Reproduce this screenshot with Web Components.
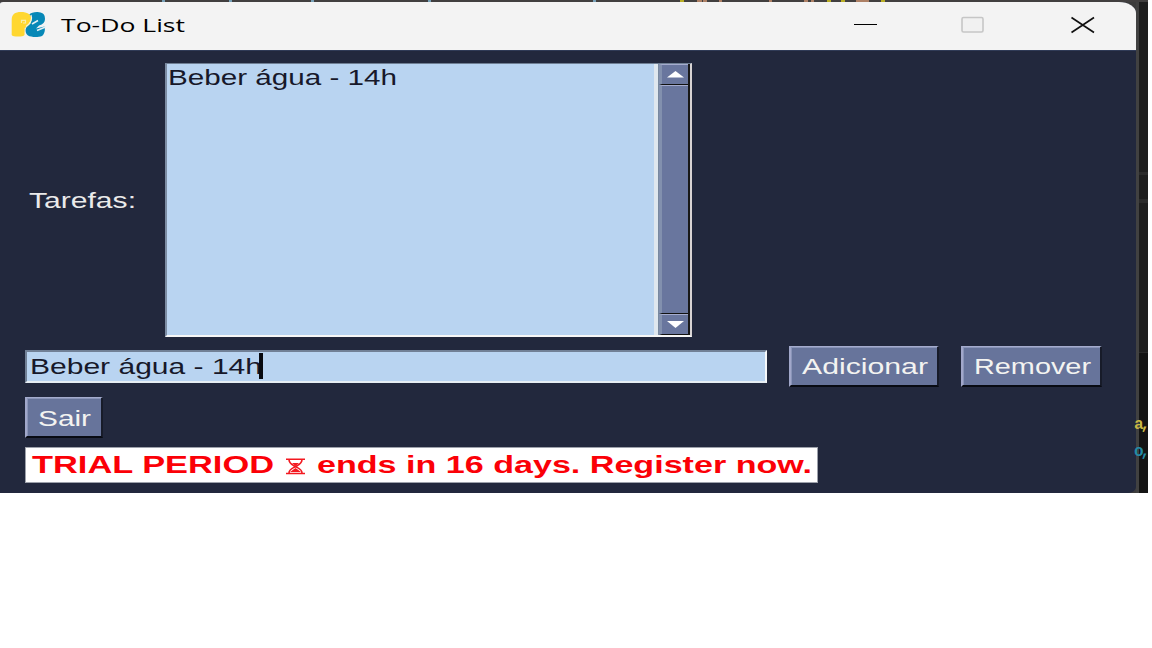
<!DOCTYPE html>
<html lang="pt"><head><meta charset="utf-8"><title>To-Do List</title>
<style>body{margin:0;background:#fff;overflow:hidden;font-family:"Liberation Sans",Arial,sans-serif}</style></head>
<body>
<todo-desktop></todo-desktop>
<script>
const define=(name,html,setup)=>customElements.define(name,class extends HTMLElement{
  connectedCallback(){
    if(this.shadowRoot)return;
    const t=document.createElement('template');t.innerHTML=html;
    this.attachShadow({mode:'open'}).append(t.content.cloneNode(true));
    if(setup)setup.call(this,this.shadowRoot);
  }
});

// One line of text, widened to a given advance length.
define('wide-text',`<style>:host{display:block;flex:none}svg{display:block;overflow:visible}</style>
<svg><text lengthAdjust="spacingAndGlyphs"></text></svg>`,function(root){
  const svg=root.querySelector('svg'),t=root.querySelector('text');
  const w=this.getAttribute('length'),s=+this.getAttribute('size');
  svg.setAttribute('width',w);svg.setAttribute('height',s);
  t.setAttribute('textLength',w);t.setAttribute('y',this.getAttribute('base')||s*.86);
  t.style.cssText='font-size:'+s+'px;fill:currentColor';
  t.textContent=this.textContent;
});

define('title-bar',`<style>
:host{display:flex;height:49px;box-sizing:border-box;background:#f3f3f3;border-bottom:1px solid #303b57;border-radius:3px 17px 0 0/2px 11px 0 0;color:#000;font-family:"Open Sans","Noto Sans",sans-serif;align-items:flex-start}
.logo{margin:9px 0 0 11px;flex:none}wide-text{margin:13px 0 0 15px}
.controls{display:flex;margin:13px 0 0 auto;padding-right:41px;gap:83px}
.controls svg:last-child{margin-left:3px}
</style>
<svg class="logo" width="35" height="27" viewBox="0 0 35 27">
<path fill="#0788b7" d="M18 4C20 1.500 24 .8 28 1.200C32.500 1.600 34 4 34 8C34 11 32 13.500 28 14.500L25 17.500L33.500 15.500C34.500 19 33.500 23 31 25C27 26.500 20 26.300 17 24.500C14 22 14 18 16 15.500L20 12Z"/>
<path fill="#ffd730" d="M.7 9C.7 3 4 .9 10 .9C16 .9 20.500 3 20.500 8C20.500 12 18 15 13.700 17L13.500 24C12.500 26 1.500 26 .7 24Z"/>
<path fill="none" stroke="#f3f3f3" stroke-width="1.200" d="M20 4C21.500 8 20 12 15 15.500"/>
<path fill="none" stroke="#f8edaa" stroke-width="1.200" d="M10.500 12V9.300H14.500V12H12"/>
<path fill="none" stroke="#e3f0f4" stroke-width="1.500" d="M21 13L27 9.500M26 19.500L34.500 16"/>
</svg>
<wide-text length="124" size="19" base="16.500">To-Do List</wide-text>
<div class="controls">
<svg width="24" height="20"><path d="M0 9.500H23" stroke="#000"/></svg>
<svg width="24" height="20"><rect x="1" y="2.500" width="21" height="14.500" rx="1.500" fill="#f1f1f1" stroke="#c6c6c6" stroke-width="1.600"/></svg>
<svg width="24" height="20"><path d="M.5 2.500L23 17.500M23 2.500L.5 17.500" fill="none" stroke="#111" stroke-width="1.700"/></svg>
</div>`);

define('push-button',`<style>
:host{display:flex;box-sizing:border-box;height:41px;background:#67749b;border:solid;border-width:1px 2px 2px 2px;border-color:#a5acce #171b29 #080b13 #a1a7ca;padding:10px 0 0 11px;color:#f3f3f1;box-shadow:inset 1px 1px #8994b8}
</style><slot></slot>`);

define('list-box',`<style>
:host{display:flex;box-sizing:border-box;width:527px;height:274px;background:#b9d4f1;border:solid;border-width:1px 2px 2px;border-color:#6f7f94 #d8d4d4 #f7f7f7 #7c8ca3}
.items{flex:1;padding:4px 0 0 1px;color:#17182a;border-right:4px solid #dfe7ef}
.bar{display:flex;flex-direction:column;width:32px;box-sizing:border-box;border-left:1px solid #7889a0;border-right:2px solid #181818;flex:none}
.arrow,.thumb{box-sizing:border-box;background:#69769e;border-left:3px solid #8290ae;border-top:1px solid #a5acce;border-bottom:1px solid #111}
.arrow{height:21px;display:flex;justify-content:center;align-items:center;flex:none}.thumb{flex:1}
</style>
<div class="items"><slot></slot></div>
<div class="bar"><div class="arrow"><svg width="17" height="7"><path fill="#fff" d="M0 6.500L8.500 0L17 6.500Z"/></svg></div><div class="thumb"></div><div class="arrow"><svg width="17" height="7"><path fill="#fff" d="M0 0H17L8.500 7Z"/></svg></div></div>`);

define('text-field',`<style>
:host{display:flex;box-sizing:border-box;width:742px;height:33px;background:#b9d4f1;color:#17182a;border:solid;border-width:2px 2px 2px;border-color:#718096 #f6f8fa #e6edf3 #718096;padding:2px 0 0 3px}
i{width:4px;height:26px;background:#080a10;margin:-1px 0 0 -3px}
</style><slot></slot><i></i>`);

define('trial-notice',`<style>
:host{display:flex;box-sizing:border-box;width:793px;height:36px;background:#fff;border:1px solid #9da1ab;padding:5px 0 0 6px;color:#fb0007;font-weight:bold}
svg{flex:none;margin:5px 12px 0 12px}
</style>
<wide-text length="242" size="24" base="20">TRIAL PERIOD</wide-text>
<svg width="19" height="17" viewBox="0 0 19 17" fill="none" stroke="#f31920" stroke-width="1.600"><path d="M0 1.200H19M0 15.500H19M3 1.500C3 6 7 7 9.500 8.500C12 10 16 11 16 15M16 1.500C16 6 12 7 9.500 8.500C7 10 3 11 3 15"/><path fill="#f31920" stroke="none" d="M6 5H13L9.500 8ZM4 14L9.500 10L15 14Z"/></svg>
<wide-text length="495" size="24" base="20">ends in 16 days. Register now.</wide-text>`);

// Sliver of the code editor that shows to the right of the window.
define('editor-edge',`<style>
:host{display:block;position:relative;width:12px;height:491px;flex:none;background:linear-gradient(90deg,#414141 3px,transparent 3px),linear-gradient(#1e1e1e 0 170px,#2b2b2b 170px 173px,#1e1e1e 173px 197px,#2b2b2b 197px 201px,#1e1e1e 201px 350px,#2a2a2a 350px 351px,#141414 351px)}
span{position:absolute;left:-2px;font:bold 16px/20px "Liberation Mono",monospace;letter-spacing:-3px}
.y{top:413px;color:#c9b844}.b{top:440px;color:#248ba5}
</style><span class="y">a,</span><span class="b">o,</span>`);

define('todo-desktop',`<style>
:host{display:block;width:1148px;height:493px;background:#1c1c1c;font-family:"Liberation Sans",Arial,sans-serif}
.strip{height:2px;background:#413f3f}.strip svg{display:block}
.row{display:flex}.frame{background:#3c3c3c}
.window{width:1136px;height:491px;flex:none;background:#22283d;border-radius:3px 17px 8px 0/2px 11px 6px 0}
main{padding:12px 0 0 25px}
.tasks{align-items:flex-start}.tasks>wide-text{margin:127px 0 0 4px;width:136px;color:#eaeaea}
.entry{margin-top:9px;align-items:center}
.add{width:150px;margin-left:22px}.remove{width:141px;margin-left:22px}.exit{width:78px;margin:10px 0 9px}
</style>
<div class="strip"><svg width="1148" height="2"><path stroke="#77a0b7" stroke-width="3" d="M162 1h3M229 1h3M311 1h3M428 1h3M593 1h3"/><path stroke="#ad8065" stroke-width="4" d="M697 1h5M703 1h4M719 1h3M769 1h3M804 1h4M811 1h3M856 1h13"/><path stroke="#b8ad25" stroke-width="4" d="M680 1h4M827 1h4M841 1h4M881 1h4"/></svg></div>
<div class="row frame"><div class="window"><title-bar></title-bar><main>
<div class="row tasks"><wide-text length="107" size="22" base="17.500">Tarefas:</wide-text><list-box><wide-text length="229" size="22" base="17">Beber água - 14h</wide-text></list-box></div>
<div class="row entry"><text-field><wide-text length="232" size="22" base="20">Beber água - 14h</wide-text></text-field><push-button class="add"><wide-text length="126" size="22" base="17">Adicionar</wide-text></push-button><push-button class="remove"><wide-text length="117" size="22" base="17">Remover</wide-text></push-button></div>
<push-button class="exit"><wide-text length="53" size="22" base="17.500">Sair</wide-text></push-button>
<trial-notice></trial-notice>
</main></div><editor-edge></editor-edge></div>`);
</script>
</body></html>
